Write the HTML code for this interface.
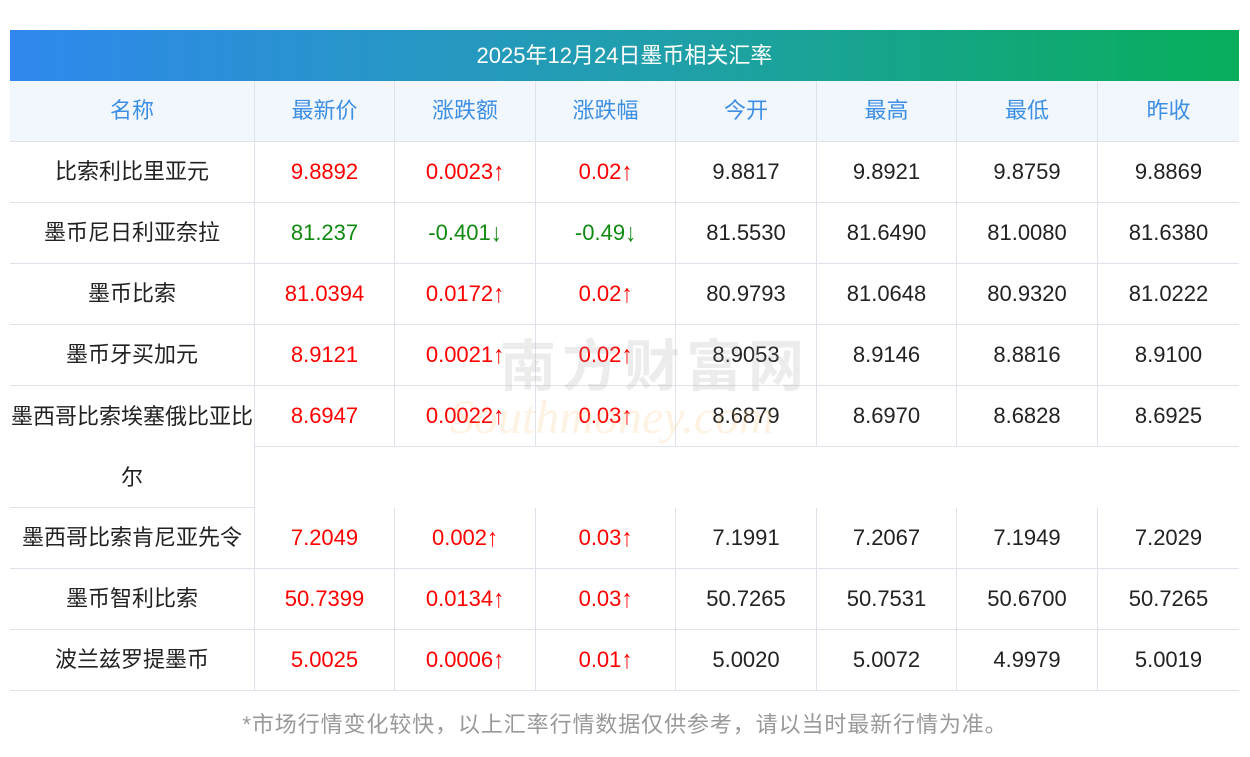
<!DOCTYPE html>
<html><head><meta charset="utf-8"><style>
body{margin:0;width:1250px;height:757px;background:#fff;font-family:"Liberation Sans","Noto Sans CJK SC",sans-serif;position:relative;overflow:hidden}
.t{position:absolute;left:10px;top:30px;width:1229px;height:51px;background:linear-gradient(90deg,#3088ee,#1fa0a8 55%,#08ae5a);color:#fff;font-size:22px;line-height:51px;text-align:center}
.c{position:absolute;box-sizing:border-box;height:61px;line-height:60px;text-align:center;font-size:22px;color:#222;border-bottom:1px solid #dfe2ea;border-right:1px solid #dfe2ea;white-space:nowrap}
.h{background:#f2f7fe;color:#3d8fe3}
.r{color:#f00}.g{color:#118a11}
.a{display:inline-block;transform:scaleY(1.15)}
.f{position:absolute;top:710px;left:0;width:1250px;text-align:center;color:#999;font-size:22px;line-height:30px;letter-spacing:0.9px}
.w{position:absolute;color:rgba(150,150,150,.18);font-size:56px;font-weight:bold;left:500px;top:322px;letter-spacing:6px}
.w2{position:absolute;color:rgba(250,190,110,.2);font-size:48px;font-style:italic;font-family:"Liberation Serif",serif;left:450px;top:390px}
</style></head><body>
<div class="t">2025年12月24日墨币相关汇率</div>
<div id="tb"></div>
<div class="w">南方财富网</div><div class="w2">Southmoney.com</div>
<div class="f">*市场行情变化较快，以上汇率行情数据仅供参考，请以当时最新行情为准。</div>
<script>
var X=[10,255,395,536,676,817,957,1098,1239];
var rows=[["h","名称","最新价","涨跌额","涨跌幅","今开","最高","最低","昨收"],
["r","比索利比里亚元","9.8892","0.0023↑","0.02↑","9.8817","9.8921","9.8759","9.8869"],
["g","墨币尼日利亚奈拉","81.237","-0.401↓","-0.49↓","81.5530","81.6490","81.0080","81.6380"],
["r","墨币比索","81.0394","0.0172↑","0.02↑","80.9793","81.0648","80.9320","81.0222"],
["r","墨币牙买加元","8.9121","0.0021↑","0.02↑","8.9053","8.9146","8.8816","8.9100"],
["r","墨西哥比索埃塞俄比亚比尔","8.6947","0.0022↑","0.03↑","8.6879","8.6970","8.6828","8.6925"],
["r","墨西哥比索肯尼亚先令","7.2049","0.002↑","0.03↑","7.1991","7.2067","7.1949","7.2029"],
["r","墨币智利比索","50.7399","0.0134↑","0.03↑","50.7265","50.7531","50.6700","50.7265"],
["r","波兰兹罗提墨币","5.0025","0.0006↑","0.01↑","5.0020","5.0072","4.9979","5.0019"]];
var tops=[81,142,203,264,325,386,508,569,630],h="";
rows.forEach(function(r,i){var y=tops[i];for(var j=0;j<8;j++){var cls="c";if(r[0]=="h")cls+=" h";else if(j>0&&j<4)cls+=" "+r[0];
var st="left:"+X[j]+"px;top:"+y+"px;width:"+(X[j+1]-X[j])+"px;";
if(j==7)st+="border-right:none;";
if(i==5&&j==0)st+="height:122px;line-height:61px;white-space:normal;padding:0 1px;";
var tx=r[j+1].replace(/([↑↓])/,'<span class="a">$1</span>');
h+='<div class="'+cls+'" style="'+st+'">'+tx+'</div>';}});
h+='<div class="c" style="left:255px;top:447px;width:984px;border-right:none;border-bottom:none"></div>';
document.getElementById("tb").innerHTML=h;
</script>
</body></html>
